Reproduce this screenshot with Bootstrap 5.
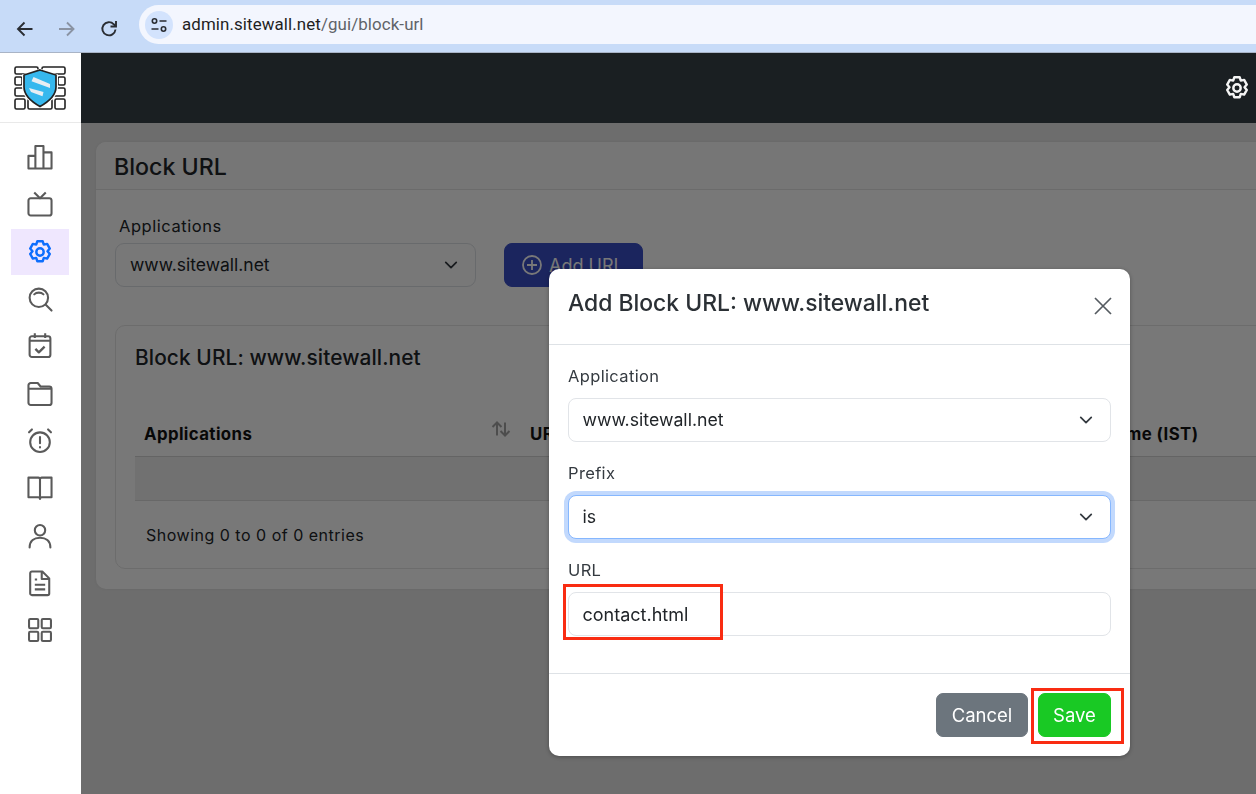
<!DOCTYPE html>
<html lang="en">
<head>
<meta charset="utf-8">
<title>Block URL</title>
<link rel="stylesheet" href="https://cdn.jsdelivr.net/npm/bootstrap@5.3.0/dist/css/bootstrap.min.css">
<style>
html,body{height:100%;overflow:hidden}
body{font-family:Inter,"Liberation Sans",sans-serif;color:#212529;background:#fff;font-size:17.5px}
.chrome-bar{height:53px;background:#c7dbf8;border-bottom:1px solid #a9b4c6;padding:5px 0 0 0}
.nav-ico{width:42px;height:40px;display:flex;align-items:center;justify-content:center}
.nav-group{padding-left:4px;gap:0;width:135px;margin-right:4px}
.omni{height:39px;background:#f3f6fe;border-radius:20px 0 0 20px;padding-left:6px;gap:9px;font-family:Roboto,sans-serif;font-size:16.9px;color:#5f6368;letter-spacing:.1px}
.omni b{font-weight:400;color:#1f1f1f}
.omni-pill{width:28px;height:28px;border-radius:50%;background:#d3e3fd;display:flex;align-items:center;justify-content:center}
.app-body{height:741px}
.side{width:81px;background:#fff}
.logo-box{height:70px;border-bottom:1px solid #e9e9e9;display:flex;align-items:center;justify-content:center;padding-right:1px}
.side-nav{padding:10.500px 1px 0 0;margin:0;list-style:none}
.side-nav li{height:47.3px;display:flex;align-items:center;justify-content:center}
.side-item{width:58px;height:46px;display:flex;align-items:center;justify-content:center;color:#5a5a5a}
.side-item svg{margin-right:1px}
.side-item.on{background:#efe7fe;color:#0d6efd}
.main-area{min-width:0;background:#e8e8e8}
.top-dark{height:70px;background:#1a1f22;padding-right:4px;color:#f4f4f4}
.page-wrap{height:671px;overflow:hidden;padding:19px 0 0 15px}
.dim{inset:0;background:rgba(0,0,0,.53)}
.page-card{width:1300px;border-radius:10px;background:#fff;box-shadow:0 0 4px rgba(0,0,0,.06)}
.page-head{height:48px;padding:8px 18px;border-bottom:1px solid #e3e3e3;background:#fafafa;border-radius:10px 10px 0 0}
.page-head h1{font-size:23.2px;font-weight:500;margin:0;line-height:34px}
.page-body{padding:25px 19px 20px}
.lbl{font-size:16.5px;letter-spacing:.55px;margin:0 0 5px 4px;line-height:23px;display:block}
.app-sel{width:361px;height:44px;font-size:17.5px;border-radius:9px;padding-left:14px}
.form-select{background-position:right 15px center;background-size:18px 14px}
.add-btn{width:139px;height:44px;margin-left:28px;background:#3a4fc8;border-color:#3a4fc8;color:#fff;border-radius:8px;font-size:18px;gap:6px;padding:0 0 0 16px;justify-content:flex-start}
.inner-card{margin-top:38px;height:244px;border:1px solid #e6e6e6;border-radius:10px;padding:16px 19px}
.inner-card h2{font-size:20.85px;font-weight:500;line-height:32px;margin:0 0 40px;letter-spacing:.1px}
.tbl-head{height:43px;border-bottom:1px solid #d5d5d5;font-weight:700;font-size:16.8px;letter-spacing:.4px;padding-left:9px;color:#111;align-items:center}
.th-a{width:386px;display:flex;align-items:center;justify-content:space-between;padding-right:19px}
.sort-ico{margin-bottom:12px}
.th-b{width:507px}
.tbl-row{height:44px;background:#f1f1f1;border-bottom:1px solid #dedede}
.entries{margin:22px 0 0 11px;font-size:16px;letter-spacing:.5px;line-height:24px}
.add-modal{z-index:1055}
.add-dialog{width:581px;max-width:none;margin:269px 0 0 549px;position:relative}
.add-content{border:0;border-radius:10px;height:487px;box-shadow:0 1px 4px rgba(0,0,0,.3)}
.add-head{height:76px;padding:0 19px;border-bottom:1px solid #dee2e6;align-items:flex-start}
.add-head h5{font-size:22.9px;font-weight:500;margin:18px 0 0;line-height:32px;color:#2b3035}
.x-btn{background:none;border:0;padding:0;margin:27px -2px 0 0;width:20px;height:20px;line-height:0}
.add-body{padding:19px 19px 0;height:328px;flex:none}
.mlbl{font-size:16.5px;letter-spacing:.35px;line-height:24px;margin:0 0 10px;display:block;color:#343a40}
.mfield{height:44px;font-size:17.7px;border-radius:8px;padding-left:13.500px;border-color:#e1e4e8;margin-bottom:19px;color:#212529}
.form-control.mfield{font-size:18px}
.mfield-focus{border-color:#86b7fe;box-shadow:0 0 0 4px #c2d9fd}
.mfield-last{margin-bottom:0}
.add-foot{height:83px;padding:0 19px 0 0;border-top:1px solid #dee2e6;gap:10px;justify-content:flex-end;align-items:flex-start}
.add-foot .btn{height:44px;font-size:18.5px;border-radius:7px;margin:19px 0 0;padding:1px 0 0;color:#fff}
.btn-cancel{width:92px;background:#6c757d;border-color:#6c757d}
.btn-save{width:73px;background:#19c924;border-color:#19c924}
.red-mark{position:absolute;border:3px solid #f92c12;pointer-events:none}
.mark-url{left:14px;top:315px;width:160px;height:56px}
.mark-save{left:482px;top:419px;width:93px;height:56px}
</style>
</head>
<body>
<div class="chrome-bar d-flex">
  <div class="nav-group d-flex align-items-center" >
    <div class="nav-ico"><svg width="18" height="18" viewBox="0 0 18 18" fill="none" stroke="#2a2d33" stroke-width="1.9"><path d="M16.5 9H2.5M8.5 2.5 2 9l6.5 6.5"/></svg></div>
    <div class="nav-ico"><svg width="18" height="18" viewBox="0 0 18 18" fill="none" stroke="#8a93a3" stroke-width="1.9"><path d="M1 9h14M9 2.5 15.500 9 9 15.500"/></svg></div>
    <div class="nav-ico"><svg width="18" height="18" viewBox="0 0 18 18" fill="none" stroke="#2a2d33" stroke-width="1.9"><path d="M15.5 9.5a6.6 6.6 0 1 1-1.7-5.2L15.6 6"/><path d="M16 1v5.5h-5.5"/></svg></div>
  </div>
  <div class="omni flex-grow-1 d-flex align-items-center">
    <span class="omni-pill"><svg width="18" height="18" viewBox="0 0 18 18" fill="none" stroke="#2a2d33" stroke-width="1.6"><circle cx="4.5" cy="5" r="2.2"/><path d="M9.5 5h7M1.5 13h7"/><circle cx="13.5" cy="13" r="2.2"/></svg></span>
    <span><b>admin.sitewall.net</b>/gui/block-url</span>
  </div>
</div>
<div class="app-body d-flex">
  <aside class="side flex-shrink-0">
    <div class="logo-box">
      <svg width="52" height="44" viewBox="0 0 52 44" fill="none">
        <g stroke="#222" stroke-width="1.6" fill="#fff">
          <rect x="1" y="1" width="23" height="7" rx="1.5"/><rect x="28" y="1" width="23" height="7" rx="1.5"/>
          <rect x="1" y="11" width="7" height="8" rx="1.5"/><rect x="12" y="11" width="28" height="8" rx="1.5"/><rect x="44" y="11" width="7" height="8" rx="1.5"/>
          <rect x="1" y="22" width="23" height="8" rx="1.5"/><rect x="28" y="22" width="23" height="8" rx="1.500"/>
          <rect x="1" y="33" width="10" height="10" rx="1.5"/><rect x="14" y="33" width="24" height="10" rx="1.5"/><rect x="41" y="33" width="10" height="10" rx="1.5"/>
        </g>
        <path d="M26 2.500 44 8.500V21c0 10-9 16-18 21C17 37 8 31 8 21V8.500Z" fill="#fff"/>
        <path d="M26 4 42 9v12c0 9-8 15-16 19.500C18 36 10 30 10 21V9Z" fill="#36b8ee" stroke="#222" stroke-width="1.7"/>
        <path d="M19.500 11 36 18v4L17.500 15.300ZM15 22l14.500 4-1 4.300L17 26Z" fill="#e8eef3"/>
      </svg>
    </div>
    <ul class="side-nav">
      <li><span class="side-item"><svg width="30" height="30" viewBox="0 0 26 26" fill="none" stroke="currentColor" stroke-width="1.8" stroke-linejoin="round"><path d="M3 12h6v11H3zM9 3.500h7V23H9zM16 9h7v14h-7z"/></svg></span></li>
      <li><span class="side-item"><svg width="30" height="30" viewBox="0 0 26 26" fill="none" stroke="currentColor" stroke-width="1.8" stroke-linejoin="round"><rect x="3" y="8" width="20" height="15" rx="2"/><path d="M8 3l5 5 5-5"/></svg></span></li>
      <li><span class="side-item on"><svg width="30" height="30" viewBox="0 0 26 26" fill="none" stroke="currentColor" stroke-width="2.100" stroke-linejoin="round"><path d="M10.700 3h4.600l1 2.900 2.900-.6 2.300 4-2 2.300 2 2.400-2.300 4-2.900-.6-1 2.900h-4.600l-1-2.900-2.900.6-2.300-4 2-2.400-2-2.300 2.300-4 2.900.6z" transform="translate(0 .7)"/><circle cx="13" cy="13" r="3.200"/></svg></span></li>
      <li><span class="side-item"><svg width="30" height="30" viewBox="0 0 26 26" fill="none" stroke="currentColor" stroke-width="1.8" stroke-linecap="round"><circle cx="12" cy="12" r="8"/><path d="M18 18l5 5M8 9c2-2 6-2 8 0"/></svg></span></li>
      <li><span class="side-item"><svg width="30" height="30" viewBox="0 0 26 26" fill="none" stroke="currentColor" stroke-width="1.8" stroke-linejoin="round"><rect x="4" y="4.500" width="18" height="18" rx="2"/><path d="M4 8.500h18M8.500 2v4M17.500 2v4" /><path d="M9 15.500l3 3 5-5" stroke-width="2"/></svg></span></li>
      <li><span class="side-item"><svg width="30" height="30" viewBox="0 0 26 26" fill="none" stroke="currentColor" stroke-width="1.8" stroke-linejoin="round"><path d="M3 5.500a2 2 0 0 1 2-2h6l2.500 3h7.500a2 2 0 0 1 2 2v12a2 2 0 0 1-2 2H5a2 2 0 0 1-2-2zM3 8.500h20"/></svg></span></li>
      <li><span class="side-item"><svg width="30" height="30" viewBox="0 0 26 26" fill="none" stroke="currentColor" stroke-width="1.8" stroke-linecap="round"><circle cx="13" cy="14" r="8.500"/><path d="M13 9.500v5.500M13 18.300v.3M3.500 5.500 6 3M22.500 5.500 20 3"/></svg></span></li>
      <li><span class="side-item"><svg width="30" height="30" viewBox="0 0 26 26" fill="none" stroke="currentColor" stroke-width="1.8" stroke-linejoin="round"><path d="M3 4h8.500a1.500 1.500 0 0 1 1.500 1.500v17a1.500 1.500 0 0 0-1.500-1.500H3zM23 4h-8.500A1.500 1.500 0 0 0 13 5.500v17a1.500 1.500 0 0 1 1.500-1.500H23z"/></svg></span></li>
      <li><span class="side-item"><svg width="30" height="30" viewBox="0 0 26 26" fill="none" stroke="currentColor" stroke-width="1.8" stroke-linecap="round"><circle cx="13" cy="8" r="4.500"/><path d="M4 23c0-6 4-8.500 9-8.500s9 2.500 9 8.500"/></svg></span></li>
      <li><span class="side-item"><svg width="30" height="30" viewBox="0 0 26 26" fill="none" stroke="currentColor" stroke-width="1.8" stroke-linejoin="round"><path d="M6 3h9l6 6v13a1.500 1.500 0 0 1-1.500 1.500H6A1.500 1.500 0 0 1 4.500 22V4.500A1.500 1.500 0 0 1 6 3zM14.500 3v6.500H21"/><path d="M8.500 10h2M8.500 14.500h9M8.500 18.500h9"/></svg></span></li>
      <li><span class="side-item"><svg width="30" height="30" viewBox="0 0 26 26" fill="none" stroke="currentColor" stroke-width="1.8"><rect x="3.500" y="3.500" width="8" height="8" rx="1"/><rect x="14.500" y="3.500" width="8" height="8" rx="1"/><rect x="3.500" y="14.500" width="8" height="8" rx="1"/><rect x="14.500" y="14.500" width="8" height="8" rx="1"/></svg></span></li>
    </ul>
  </aside>
  <div class="main-area flex-grow-1">
    <div class="top-dark d-flex align-items-center justify-content-end">
      <svg width="30" height="30" viewBox="0 0 26 26" fill="none" stroke="currentColor" stroke-width="2.100" stroke-linejoin="round"><path d="M10.700 3h4.600l1 2.900 2.900-.6 2.300 4-2 2.300 2 2.400-2.300 4-2.900-.6-1 2.900h-4.600l-1-2.900-2.900.6-2.300-4 2-2.400-2-2.300 2.300-4 2.900.6z" transform="translate(0 .7)"/><circle cx="13" cy="13" r="3.200"/></svg>
    </div>
    <div class="page-wrap position-relative">
      <div class="page-card">
        <div class="page-head"><h1>Block URL</h1></div>
        <div class="page-body">
          <label class="lbl" for="appSel">Applications</label>
          <div class="d-flex">
            <select id="appSel" class="form-select app-sel"><option>www.sitewall.net</option></select>
            <button type="button" class="btn add-btn d-flex align-items-center">
              <svg width="22" height="22" viewBox="0 0 22 22" fill="none" stroke="currentColor" stroke-width="1.800"><circle cx="11" cy="11" r="9"/><path d="M11 6v10M6 11h10"/></svg>Add URL
            </button>
          </div>
          <div class="inner-card">
            <h2>Block URL: www.sitewall.net</h2>
            <div class="tbl-head d-flex">
              <div class="th-a"><span>Applications</span>
                <svg class="sort-ico" width="20" height="18" viewBox="0 0 20 18" fill="none" stroke="#a5a5a5" stroke-width="2"><path d="M6 15.500V2.500M1.500 7 6 2.500 10.500 7M14 2.500v13M9.500 11l4.500 4.500 4.500-4.500"/></svg>
              </div>
              <div class="th-b">URL</div>
              <div class="text-nowrap">Created Time (IST)</div>
            </div>
            <div class="tbl-row"></div>
            <div class="entries">Showing 0 to 0 of 0 entries</div>
          </div>
        </div>
      </div>
      <div class="dim position-absolute"></div>
    </div>
  </div>
</div>

<div class="modal d-block add-modal" tabindex="-1">
  <div class="modal-dialog add-dialog">
    <div class="modal-content add-content">
      <div class="modal-header add-head">
        <h5 class="modal-title">Add Block URL: www.sitewall.net</h5>
        <button type="button" class="x-btn ms-auto" aria-label="Close"><svg width="20" height="20" viewBox="0 0 20 20" fill="none" stroke="#555b61" stroke-width="1.700"><path d="M2 2l16 16M18 2 2 18"/></svg></button>
      </div>
      <div class="modal-body add-body">
        <label class="mlbl" for="mApp">Application</label>
        <select id="mApp" class="form-select mfield"><option>www.sitewall.net</option></select>
        <label class="mlbl" for="mPre">Prefix</label>
        <select id="mPre" class="form-select mfield mfield-focus"><option>is</option></select>
        <label class="mlbl" for="mUrl">URL</label>
        <input id="mUrl" type="text" class="form-control mfield mfield-last" value="contact.html">
      </div>
      <div class="modal-footer add-foot">
        <button type="button" class="btn btn-cancel">Cancel</button>
        <button type="button" class="btn btn-save">Save</button>
      </div>
    </div>
    <div class="red-mark mark-url"></div>
    <div class="red-mark mark-save"></div>
  </div>
</div>
<script src="https://cdn.jsdelivr.net/npm/bootstrap@5.3.0/dist/js/bootstrap.bundle.min.js"></script>
</body>
</html>
